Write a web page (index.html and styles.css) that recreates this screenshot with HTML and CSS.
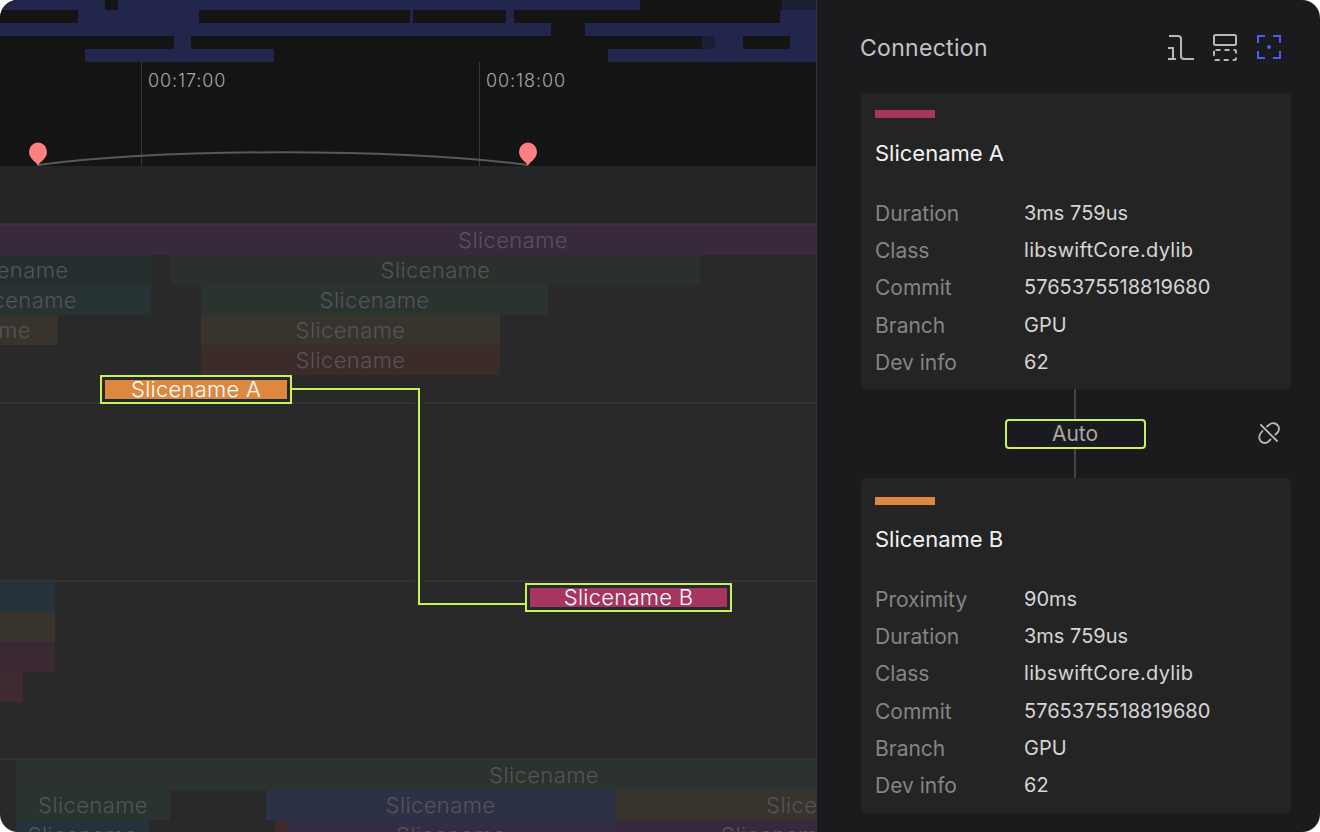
FILE: index.html
```html
<!DOCTYPE html>
<html lang="en">
<head>
<meta charset="UTF-8">
<title>Connection</title>
<link rel="stylesheet" href="styles.css">
</head>
<body>
<div class="frame">
	<div class="timeline">
		<div class="overview">
			<div class="ov-row ov-r0"><i class="ov" style="left:0;width:105px"></i><i class="ov" style="left:118px;width:522px"></i><i class="ov dim" style="left:782px;width:34px"></i></div>
			<div class="ov-row ov-r1"><i class="ov" style="left:78px;width:121px"></i><i class="ov" style="left:410px;width:3px"></i><i class="ov" style="left:506px;width:8px"></i><i class="ov" style="left:780px;width:36px"></i></div>
			<div class="ov-row ov-r1"><i class="ov" style="left:0;width:551px"></i><i class="ov" style="left:585px;width:231px"></i></div>
			<div class="ov-row ov-r1"><i class="ov" style="left:174px;width:17px"></i><i class="ov dim" style="left:702px;width:13px"></i><i class="ov" style="left:715px;width:28px"></i><i class="ov" style="left:790px;width:26px"></i></div>
			<div class="ov-row ov-r1"><i class="ov" style="left:85px;width:189px"></i><i class="ov" style="left:608px;width:208px"></i></div>
		</div>
		<div class="ruler">
			<div class="tick" style="left:141px"><span>00:17:00</span></div>
			<div class="tick" style="left:479px"><span>00:18:00</span></div>
			<svg class="range" width="816" height="104" viewBox="0 0 816 104">
				<path d="M38 103C170 86 396 86 528 103" fill="none" stroke="#595959" stroke-width="2"/>
				<path d="M38 104C37 100 29 97 29 90A9 9.500 0 0 1 47 90C47 97 39 100 38 104Z" fill="#ff8080"/>
				<path d="M528 104C527 100 519 97 519 90A9 9.500 0 0 1 537 90C537 97 529 100 528 104Z" fill="#ff8080"/>
			</svg>
		</div>
		<div class="gutter"></div>

		<div class="track track-first">
			<div class="row"><div class="slice purple" style="left:-300px;width:1626px">Slicename</div></div>
			<div class="row"><div class="slice teal-dk" style="left:-125px;width:277px">Slicename</div><div class="slice green-dk" style="left:171px;width:529px">Slicename</div></div>
			<div class="row"><div class="slice teal" style="left:-107px;width:258px">Slicename</div><div class="slice green" style="left:201px;width:347px">Slicename</div></div>
			<div class="row"><div class="slice olive" style="left:-106px;width:164px">Slicename</div><div class="slice olive" style="left:201px;width:299px">Slicename</div></div>
			<div class="row"><div class="slice rust" style="left:201px;width:299px">Slicename</div></div>
			<div class="row"><div class="picked" style="left:100px;width:192px"><div class="picked-fill orange">Slicename A</div></div></div>
		</div>
		<div class="track"></div>
		<div class="track">
			<div class="row"><div class="slice blue-teal" style="left:0;width:55px"></div><div class="picked picked-b" style="left:525px;width:207px"><div class="picked-fill magenta">Slicename B</div></div></div>
			<div class="row"><div class="slice olive" style="left:0;width:55px"></div></div>
			<div class="row"><div class="slice plum" style="left:0;width:55px"></div></div>
			<div class="row"><div class="slice wine" style="left:0;width:23px"></div></div>
		</div>
		<div class="track">
			<div class="row"><div class="slice green-lt" style="left:16px;width:1056px">Slicename</div></div>
			<div class="row"><div class="slice green-bl" style="left:16px;width:154px">Slicename</div><div class="slice navy" style="left:266px;width:349px">Slicename</div><div class="slice olive" style="left:615px;width:412px">Slicename</div></div>
			<div class="row"><div class="slice blue-teal" style="left:16px;width:133px">Slicename</div><div class="slice wine" style="left:275px;width:12px"></div><div class="slice indigo" style="left:287px;width:328px">Slicename</div><div class="slice purple" style="left:615px;width:322px">Slicename</div></div>
		</div>

		<svg class="link" width="816" height="832" viewBox="0 0 816 832">
			<path d="M415 403H424M415 581H424" stroke="#29292a" stroke-width="4"/>
			<path d="M292 389H419V604H525" fill="none" stroke="#c6f25c" stroke-width="2"/>
		</svg>
	</div>

	<aside class="panel">
		<header class="panel-head">
			<h1>Connection</h1>
			<div class="tools">
				<svg width="27" height="28" viewBox="0 0 27 28" fill="none" stroke="#b8b8b8" stroke-width="2">
					<path d="M2 2H11Q14 2 14 5V22Q14 25 17 25H27"/>
					<path d="M1 14H6V25M1 25H9"/>
				</svg>
				<svg width="26" height="28" viewBox="0 0 26 28" fill="none" stroke="#b8b8b8" stroke-width="2">
					<rect x="2" y="1" width="22" height="10" rx="1.500"/>
					<rect x="2" y="16" width="22" height="10" rx="1.500" stroke-dasharray="5 4"/>
				</svg>
				<svg width="26" height="28" viewBox="0 0 26 28" fill="none" stroke="#4a5cf5" stroke-width="2">
					<path d="M9 2H2V9M17 2H24V9M2 17V24H9M24 17V24H17"/>
					<circle cx="13" cy="13" r="2" fill="#4a5cf5" stroke="none"/>
				</svg>
			</div>
		</header>

		<section class="card">
			<div class="accent accent-magenta"></div>
			<h2>Slicename A</h2>
			<dl class="facts">
				<dt>Duration</dt><dd>3ms 759us</dd>
				<dt>Class</dt><dd class="lib">libswiftCore.dylib</dd>
				<dt>Commit</dt><dd>5765375518819680</dd>
				<dt>Branch</dt><dd>GPU</dd>
				<dt>Dev info</dt><dd>62</dd>
			</dl>
		</section>

		<div class="joint">
			<div class="auto">Auto</div>
			<svg class="unlink" width="24" height="24" viewBox="0 0 24 24" fill="none" stroke="#b8b8b8" stroke-width="1.800" stroke-linecap="round">
				<path d="M10 5.500L12.500 3.500C15 1.500 18.500 2 20.500 4C22.500 6 22.500 9.500 20.500 11.500L18.500 13.500"/>
				<path d="M5.500 10L3.500 12.500C1.500 15 2 18.500 4 20.500C6 22.500 9.500 22.500 11.500 20.500L13.500 18.500"/>
				<path d="M4 4L20 20"/>
			</svg>
		</div>

		<section class="card card-b">
			<div class="accent accent-orange"></div>
			<h2>Slicename B</h2>
			<dl class="facts">
				<dt>Proximity</dt><dd>90ms</dd>
				<dt>Duration</dt><dd>3ms 759us</dd>
				<dt>Class</dt><dd class="lib">libswiftCore.dylib</dd>
				<dt>Commit</dt><dd>5765375518819680</dd>
				<dt>Branch</dt><dd>GPU</dd>
				<dt>Dev info</dt><dd>62</dd>
			</dl>
		</section>
	</aside>
</div>
</body>
</html>
```

FILE: styles.css
```css
* {
	box-sizing: border-box;
}
html, body {
	margin: 0;
	padding: 0;
	background: #ffffff;
}
body {
	font-family: Inter, "Liberation Sans", sans-serif;
}
.frame {
	display: flex;
	width: 1320px;
	height: 832px;
	border-radius: 18px;
	overflow: hidden;
}

/* left side */
.timeline {
	position: relative;
	width: 816px;
	height: 832px;
	overflow: hidden;
	flex: none;
	background: #29292a;
}
.overview {
	height: 62px;
	background: #141414;
}
.ov-row {
	position: relative;
}
.ov-r0 {
	height: 10px;
}
.ov-r1 {
	height: 13px;
}
.ov {
	position: absolute;
	top: 0;
	bottom: 0;
	background: #22264d;
}
.ov.dim {
	background: #1c1f33;
}
.ruler {
	position: relative;
	height: 104px;
	background: #141414;
}
.tick {
	position: absolute;
	top: 0;
	bottom: 0;
	width: 1px;
	background: #383838;
}
.tick span {
	position: absolute;
	left: 7px;
	top: 6px;
	color: #a8a8a8;
	font-size: 18px;
	font-weight: 300;
	line-height: 26px;
	letter-spacing: 0.9px;
	white-space: nowrap;
}
.range {
	position: absolute;
	left: 0;
	top: 0;
}
.gutter {
	height: 58px;
	background: #252526;
}
.track {
	height: 178px;
	border-top: 1px solid #363637;
	box-shadow: 0 -1px 0 #323233;
}
.track-first {
	height: 179px;
}
.row {
	position: relative;
	height: 30px;
}
.slice {
	position: absolute;
	top: 0;
	bottom: 0;
	color: #555556;
	font-size: 22px;
	font-weight: 300;
	line-height: 30px;
	letter-spacing: 0.4px;
	text-align: center;
	white-space: nowrap;
	overflow: hidden;
}
.purple { background: #38293f; }
.teal-dk { background: #252f30; }
.teal { background: #263233; }
.green-dk { background: #2a302b; }
.green { background: #2b332e; }
.green-lt { background: #2c332e; }
.green-bl { background: #29332f; }
.olive { background: #38342d; }
.rust { background: #3b2b29; }
.blue-teal { background: #25323c; }
.plum { background: #3a2833; }
.wine { background: #3f2a2f; }
.navy { background: #2c3148; }
.indigo { background: #332c44; }

.picked {
	position: absolute;
	top: 0;
	height: 29px;
	padding: 3px;
	border: 2px solid #c6f25c;
	background: #29292a;
}
.picked-b {
	top: 1px;
}
.picked-fill {
	height: 19px;
	color: #ffffff;
	font-size: 22px;
	font-weight: 300;
	line-height: 19px;
	letter-spacing: 0.25px;
	text-align: center;
	white-space: nowrap;
}
.orange { background: #dd8840; }
.magenta { background: #a63560; }
.link {
	position: absolute;
	left: 0;
	top: 0;
	pointer-events: none;
}

/* right side */
.panel {
	flex: 1;
	height: 832px;
	padding: 0 29px 0 44px;
	background: #1b1b1d;
	border-left: 1px solid #34363b;
}
.panel-head {
	display: flex;
	align-items: center;
	justify-content: space-between;
	height: 93px;
	padding-right: 9px;
	margin-left: -1px;
}
.panel-head h1 {
	margin: 2px 0 0;
	color: #c4c4c4;
	font-size: 23px;
	font-weight: 400;
	letter-spacing: 0.3px;
}
.tools {
	display: flex;
	gap: 18px;
	margin-top: 3px;
}
.card {
	height: 296px;
	padding: 17px 14px 0;
	background: #242425;
	border-radius: 4px;
}
.card-b {
	height: 335px;
	padding-top: 19px;
}
.accent {
	width: 60px;
	height: 8px;
}
.accent-magenta { background: #a63560; }
.accent-orange { background: #dd8840; }
.card h2 {
	margin: 20px 0 27px;
	color: #f2f2f2;
	font-size: 22px;
	font-weight: 400;
	line-height: 30px;
}
.card-b h2 {
	margin-top: 19px;
}
.facts {
	display: grid;
	grid-template-columns: 149px 1fr;
	grid-auto-rows: 37.2px;
	margin: 0;
	font-size: 20px;
	line-height: 37px;
}
.facts dt {
	color: #858585;
	font-size: 21px;
}
.facts dd {
	margin: 0;
	color: #d6d6d6;
}
.facts .lib {
	letter-spacing: 0.3px;
}
.joint {
	position: relative;
	display: flex;
	align-items: center;
	justify-content: center;
	height: 89px;
}
.joint::before {
	content: "";
	position: absolute;
	left: 50%;
	top: 0;
	bottom: 0;
	width: 2px;
	margin-left: -2px;
	background: #444446;
}
.auto {
	position: relative;
	width: 141px;
	height: 30px;
	margin-left: -2px;
	border: 2px solid #c6f25c;
	border-radius: 4px;
	background: #1b1b1d;
	color: #a8a8a8;
	font-size: 21px;
	line-height: 26px;
	text-align: center;
}
.unlink {
	position: absolute;
	right: 10px;
	top: 32px;
}
```
